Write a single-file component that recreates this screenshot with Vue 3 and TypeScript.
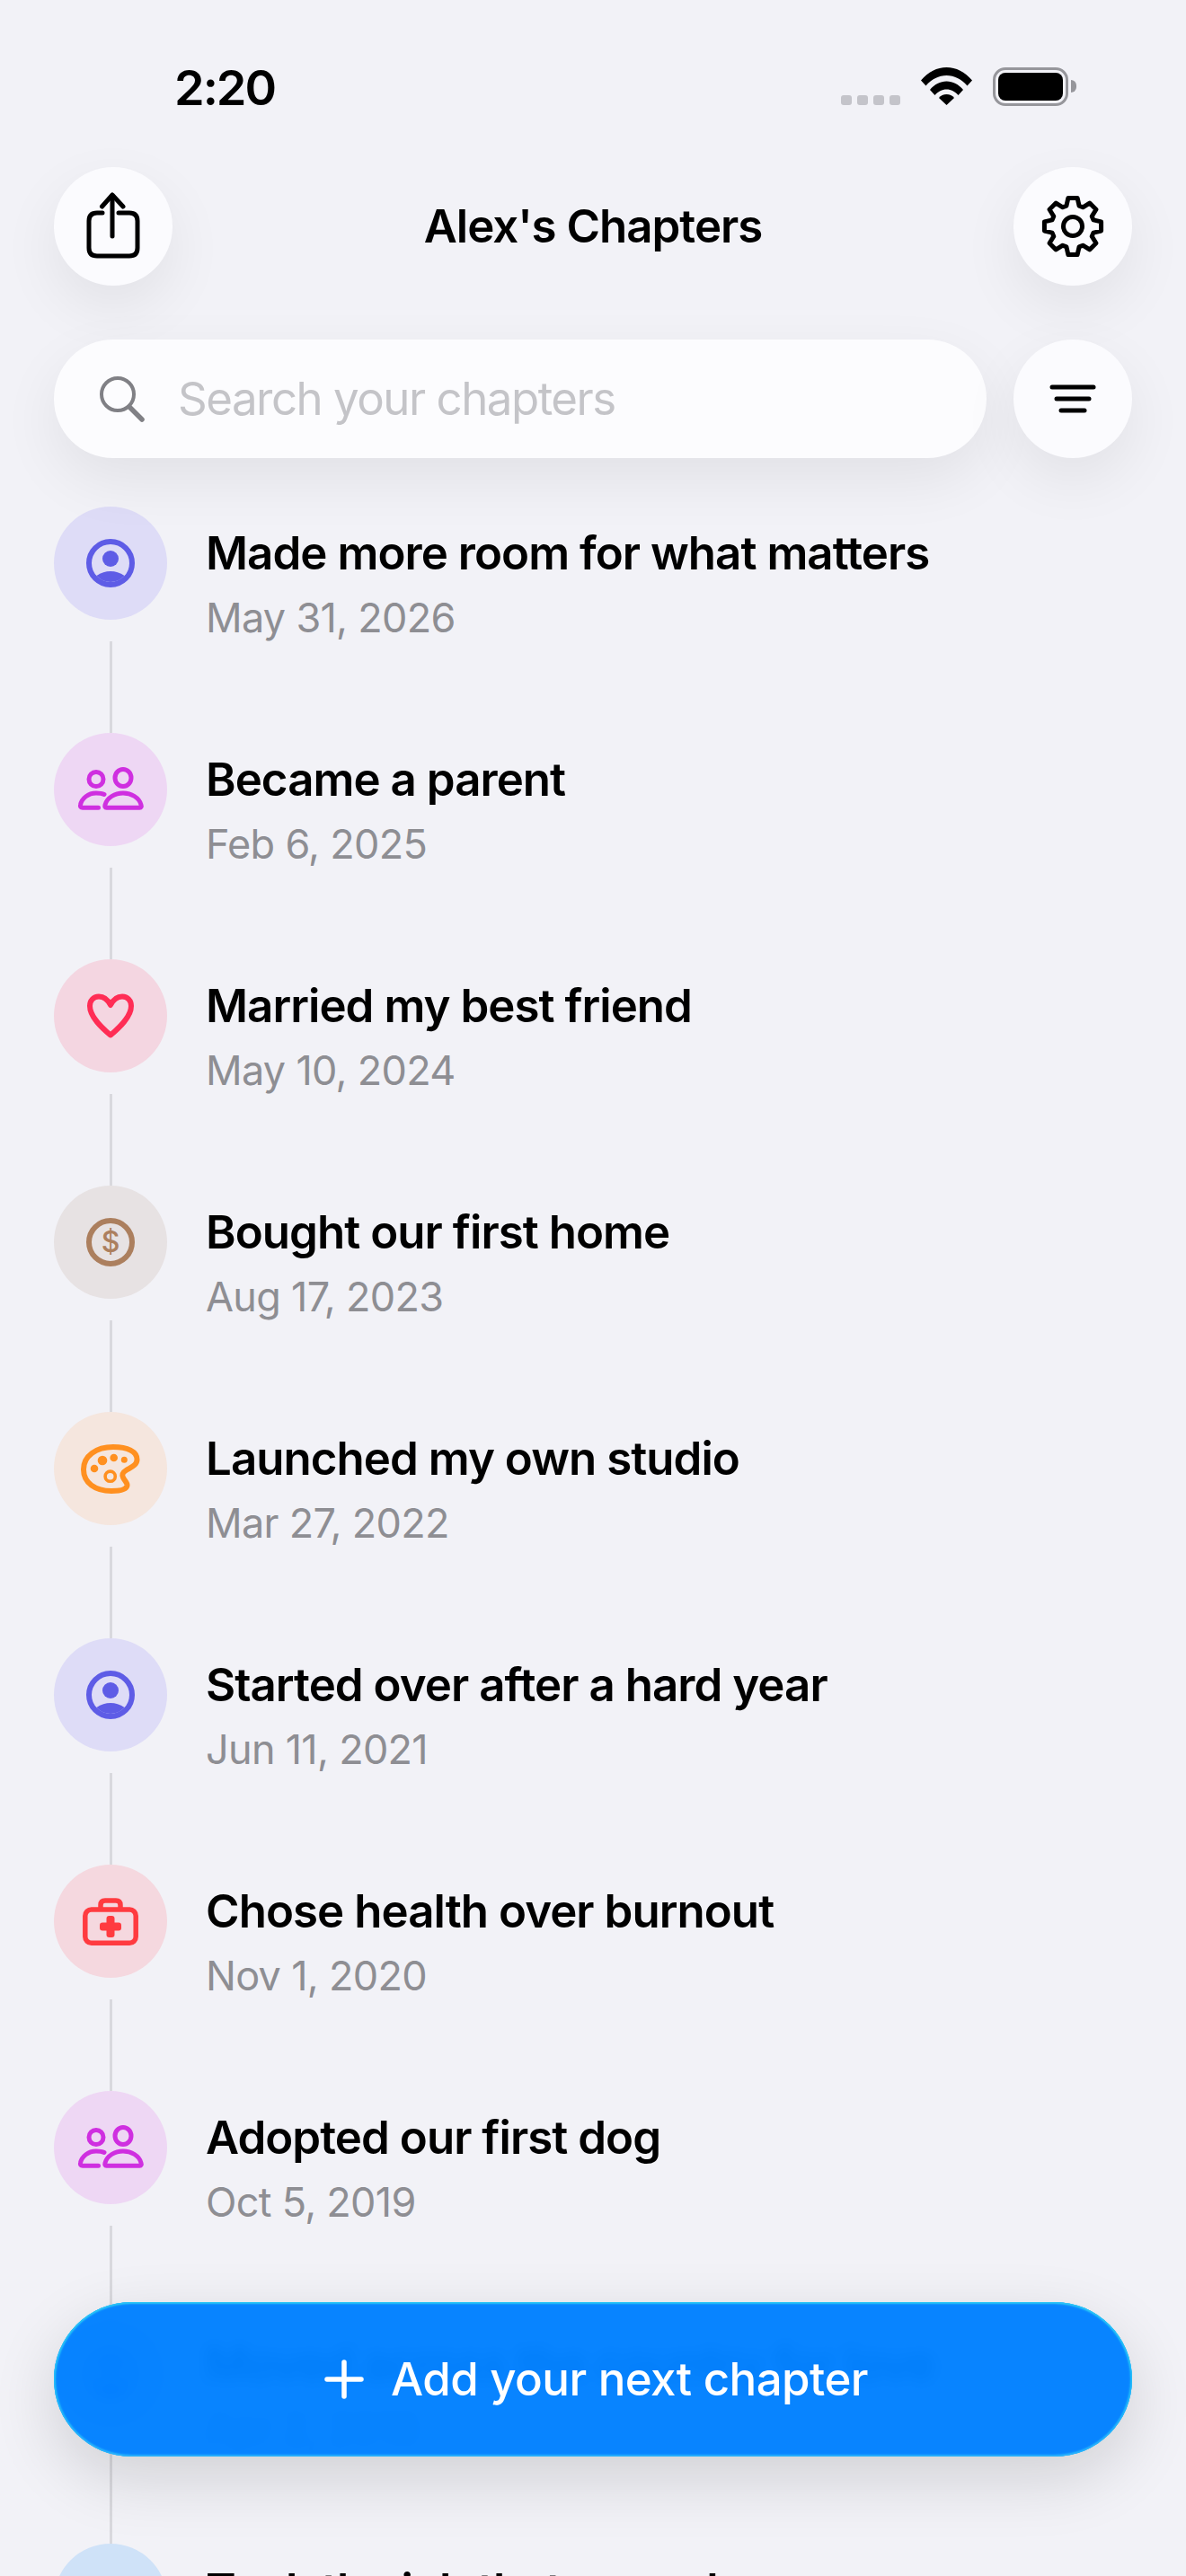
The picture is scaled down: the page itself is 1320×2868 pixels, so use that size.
<script setup lang="ts">
type Kind = 'user' | 'people' | 'heart' | 'money' | 'palette' | 'medical' | 'blank'
interface Chapter { title: string; date: string; kind: Kind; bg: string; fg: string }

const purple = { kind: 'user' as Kind, bg: '#dedcf7', fg: '#5e5ce6' }
const people = { kind: 'people' as Kind, bg: '#eed7f4', fg: '#cf2fe0' }

const chapters: Chapter[] = [
  { title: 'Made more room for what matters', date: 'May 31, 2026', ...purple },
  { title: 'Became a parent', date: 'Feb 6, 2025', ...people },
  { title: 'Married my best friend', date: 'May 10, 2024', kind: 'heart', bg: '#f4d6e1', fg: '#ff2d55' },
  { title: 'Bought our first home', date: 'Aug 17, 2023', kind: 'money', bg: '#e7e2e3', fg: '#ac7f5e' },
  { title: 'Launched my own studio', date: 'Mar 27, 2022', kind: 'palette', bg: '#f5e6de', fg: '#ff9020' },
  { title: 'Started over after a hard year', date: 'Jun 11, 2021', ...purple },
  { title: 'Chose health over burnout', date: 'Nov 1, 2020', kind: 'medical', bg: '#f5d8df', fg: '#ff3b40' },
  { title: 'Adopted our first dog', date: 'Oct 5, 2019', ...people },
  { title: 'Moved across the country for love', date: 'Apr 2, 2018', ...purple },
  { title: 'Took the job that moved us', date: 'Sep 9, 2017', kind: 'blank', bg: '#cfe2f8', fg: '#0a84ff' },
]

function gearPath(): string {
  const cx = 36
  const cy = 36
  const outer = 32
  const root = 24
  const parts: string[] = []
  for (let i = 0; i < 8; i++) {
    const a = (i * Math.PI) / 4 - Math.PI / 2
    const pts: [number, number][] = [
      [root, -0.3],
      [outer, -0.16],
      [outer, 0.16],
      [root, 0.3],
    ]
    pts.forEach(([r, d]) => {
      const x = (cx + r * Math.cos(a + d)).toFixed(2)
      const y = (cy + r * Math.sin(a + d)).toFixed(2)
      parts.push(`${parts.length === 0 ? 'M' : 'L'}${x} ${y}`)
    })
  }
  return parts.join(' ') + ' Z'
}
const gear = gearPath()
</script>

<template>
  <div class="page">
    <header class="top">
      <div class="status">
        <span class="time">2:20</span>
        <div class="status-icons">
          <div class="dots"><i></i><i></i><i></i><i></i></div>
          <svg class="wifi" width="57" height="42" viewBox="0 0 57 42">
            <path d="M0 14.5 C8 5 18 0 28.5 0 C39 0 49 5 57 14.5 L51.5 20.5 C45 13 37 9 28.5 9 C20 9 12 13 5.5 20.5Z" />
            <path d="M10 25 C15 19 21.5 15.5 28.5 15.5 C35.5 15.5 42 19 47 25 L41.5 31 C38 27 33.5 24.5 28.5 24.5 C23.5 24.5 19 27 15.5 31Z" />
            <path d="M20 34 C22 31.5 25 30 28.5 30 C32 30 35 31.5 37 34 L28.5 42Z" />
          </svg>
          <div class="battery"><div class="cell"></div><div class="nub"></div></div>
        </div>
      </div>

      <nav class="nav">
        <button class="round">
          <svg width="60" height="76" viewBox="0 0 60 76" fill="none" stroke="#000" stroke-width="5" stroke-linecap="round" stroke-linejoin="round">
            <path d="M18 23 H12 C6 23 3 26 3 32 V62 C3 68 6 71 12 71 H48 C54 71 57 68 57 62 V32 C57 26 54 23 48 23 H36" />
            <path d="M29 49 V4" />
            <path d="M17.5 16 L29 3 L41 16" />
          </svg>
        </button>
        <h1 class="nav-title">Alex's Chapters</h1>
        <button class="round">
          <svg width="72" height="72" viewBox="0 0 72 72" fill="none" stroke="#000" stroke-width="5" stroke-linejoin="round">
            <path :d="gear" />
            <circle cx="36" cy="36" r="10.5" />
          </svg>
        </button>
      </nav>

      <div class="search-row">
        <div class="search">
          <svg width="52" height="52" viewBox="0 0 52 52" fill="none" stroke="#808085" stroke-linecap="round">
            <circle cx="21" cy="21" r="18" stroke-width="4" />
            <path d="M34 35 L48 49" stroke-width="5.5" />
          </svg>
          <span class="placeholder">Search your chapters</span>
        </div>
        <button class="round">
          <svg width="52" height="32" viewBox="0 0 52 32" fill="none" stroke="#000" stroke-width="5" stroke-linecap="round">
            <path d="M3 3 H49" />
            <path d="M8 16 H44" />
            <path d="M13 29 H39" />
          </svg>
        </button>
      </div>
    </header>

    <ol class="list">
      <li v-for="c in chapters" :key="c.title" class="row">
        <div class="rail">
          <div class="badge" :style="{ background: c.bg, color: c.fg }">
            <svg width="126" height="126" viewBox="0 0 126 126">
              <g v-if="c.kind === 'user'" fill="currentColor">
                <circle cx="63" cy="63" r="24" fill="none" stroke="currentColor" stroke-width="6" />
                <circle cx="63" cy="58" r="9" />
                <path d="M47.4 77 Q55 72 63 72 Q71 72 78.6 77 A21 21 0 0 1 47.4 77Z" />
              </g>
              <g v-else-if="c.kind === 'people'" fill="none" stroke="currentColor" stroke-width="5" stroke-linejoin="round" stroke-linecap="round">
                <ellipse cx="77" cy="50" rx="9" ry="9.5" />
                <circle cx="47" cy="51.5" r="8" />
                <path d="M58.5 83.2 H95.5 C97 83.2 97.7 82 97 80 C95 72 86 67 77 67 C68 67 59 72 57 80 C56.5 82 57 83.2 58.5 83.2Z" />
                <path d="M56 68.5 C54 67.5 50 67 47 67 C38 67 31 73 29.5 80 C29 82 30 83.2 32 83.2 H49.5" />
              </g>
              <path v-else-if="c.kind === 'heart'" fill="none" stroke="currentColor" stroke-width="6" stroke-linejoin="round" d="M63 51 C60 45 55 41.5 50 41.5 C44 41.5 40 46 40 52 C40 64 53 76 63 84.5 C73 76 86 64 86 52 C86 46 82 41.5 76 41.5 C71 41.5 66 45 63 51Z" />
              <g v-else-if="c.kind === 'money'">
                <circle cx="63" cy="63" r="24" fill="none" stroke="currentColor" stroke-width="6" />
                <text x="63" y="74" text-anchor="middle" class="dollar" fill="currentColor">$</text>
              </g>
              <g v-else-if="c.kind === 'palette'" fill="currentColor">
                <path fill="none" stroke="currentColor" stroke-width="6" stroke-linejoin="round" d="M66 39 C82 39 92.5 44 92.5 53 C92.5 59 87 61 81 64.5 C77 67 75 69 77 73 C79 77 82 79 81.5 82 C80.5 87 73 88 64 88 C46 88 33 79 33 64 C33 49 47 39 66 39Z" />
                <circle cx="54" cy="54" r="5.3" />
                <circle cx="66.7" cy="51" r="4.3" />
                <circle cx="78.3" cy="53.3" r="3.5" />
                <circle cx="45" cy="63" r="4.3" />
                <circle cx="62.7" cy="71.7" r="5.6" fill="none" stroke="currentColor" stroke-width="3.6" />
              </g>
              <g v-else-if="c.kind === 'medical'" fill="none" stroke="currentColor" stroke-width="5.5">
                <rect x="34.8" y="50" width="56.4" height="37.3" rx="7" />
                <path d="M52 49 V45 Q52 40 57 40 H69 Q74 40 74 45 V49" />
                <rect x="58.5" y="57" width="9" height="24" rx="3" fill="currentColor" stroke="none" />
                <rect x="51" y="64.5" width="24" height="9" rx="3" fill="currentColor" stroke="none" />
              </g>
            </svg>
          </div>
          <div class="link"></div>
        </div>
        <div class="text">
          <div class="title">{{ c.title }}</div>
          <div class="date">{{ c.date }}</div>
        </div>
      </li>
    </ol>

    <button class="add">
      <svg width="44" height="44" viewBox="0 0 44 44" fill="none" stroke="#fff" stroke-width="5.5" stroke-linecap="round">
        <path d="M22 3 V41" />
        <path d="M3 22 H41" />
      </svg>
      <span>Add your next chapter</span>
    </button>
  </div>
</template>

<style>
html, body { margin: 0; background: #f2f2f7; }
</style>

<style scoped>
.page {
  position: relative;
  width: 1320px;
  height: 2868px;
  overflow: hidden;
  background: #f2f2f7;
  font-family: Inter, "Liberation Sans", sans-serif;
  color: #000;
}
.top { position: relative; z-index: 2; height: 564px; }
.status {
  height: 186px;
  box-sizing: border-box;
  padding: 67px 131px 0 194px;
  display: flex;
  justify-content: space-between;
  align-items: flex-start;
}
.time { font-size: 54px; line-height: 62px; font-weight: 600; letter-spacing: -2px; }
.status-icons { display: flex; align-items: flex-end; height: 43px; margin-top: 8px; }
.dots { display: flex; gap: 6px; margin-bottom: 1px; }
.dots i { width: 12px; height: 11px; border-radius: 3px; background: #c4c4ca; }
.wifi { margin-left: 23px; fill: #000; margin-bottom: 1px; }
.battery {
  position: relative;
  box-sizing: border-box;
  margin-left: 23px;
  width: 84px;
  height: 43px;
  border: 3px solid #96969b;
  border-radius: 14px;
  padding: 3px;
}
.cell { width: 100%; height: 100%; background: #000; border-radius: 8px; }
.nub {
  position: absolute;
  right: -12px;
  top: 11px;
  width: 6px;
  height: 14px;
  background: #96969b;
  border-radius: 0 6px 6px 0;
}
.nav { height: 132px; padding: 0 60px; display: flex; align-items: center; justify-content: space-between; }
.nav-title { margin: 0; font-size: 51px; line-height: 60px; font-weight: 600; letter-spacing: -1px; }
.round {
  width: 132px;
  height: 132px;
  flex: none;
  border: 0;
  padding: 0;
  border-radius: 50%;
  background: #fbfbfe;
  display: flex;
  align-items: center;
  justify-content: center;
  box-shadow: 0 24px 66px rgba(0, 0, 0, 0.07);
}
.search-row { margin-top: 60px; padding: 0 60px; display: flex; gap: 30px; }
.search {
  flex: 1;
  height: 132px;
  border-radius: 66px;
  background: #fcfcfe;
  display: flex;
  align-items: center;
  padding-left: 50px;
  box-shadow: 0 24px 66px rgba(0, 0, 0, 0.07);
}
.placeholder { margin-left: 36px; font-size: 51px; line-height: 60px; color: #c4c4c8; letter-spacing: -1.5px; }
.list { list-style: none; margin: 0; padding: 0 60px; }
.row { display: flex; gap: 43px; height: 252px; }
.rail { width: 126px; flex: none; }
.badge { width: 126px; height: 126px; border-radius: 50%; }
.badge svg { display: block; }
.dollar { font-family: Inter, sans-serif; font-size: 32px; font-weight: 500; }
.link { width: 3px; height: 102px; margin: 24px 0 0 62px; background: #d9d9de; }
.text { padding-top: 22px; }
.title { font-size: 51px; line-height: 60px; font-weight: 600; letter-spacing: -0.95px; }
.date { margin-top: 15px; font-size: 45px; line-height: 54px; color: #8e8e93; letter-spacing: -0.7px; }
.add {
  position: absolute;
  z-index: 3;
  left: 60px;
  right: 60px;
  top: 2563px;
  height: 172px;
  border: 0;
  padding: 0 0 0 7px;
  border-radius: 86px;
  background: rgba(0, 128, 255, 0.97);
  backdrop-filter: blur(8px);
  color: #fff;
  font: 500 51px/60px Inter, "Liberation Sans", sans-serif;
  letter-spacing: -0.55px;
  display: flex;
  align-items: center;
  justify-content: center;
  gap: 30px;
  box-shadow: inset 0 2px 2px #2cc8f6, inset 0 -2px 2px #2ab4fb, inset 2px 0 2px #20bdf8, inset -2px 0 2px #20bdf8, 0 24px 72px rgba(0, 0, 0, 0.14);
}
</style>
